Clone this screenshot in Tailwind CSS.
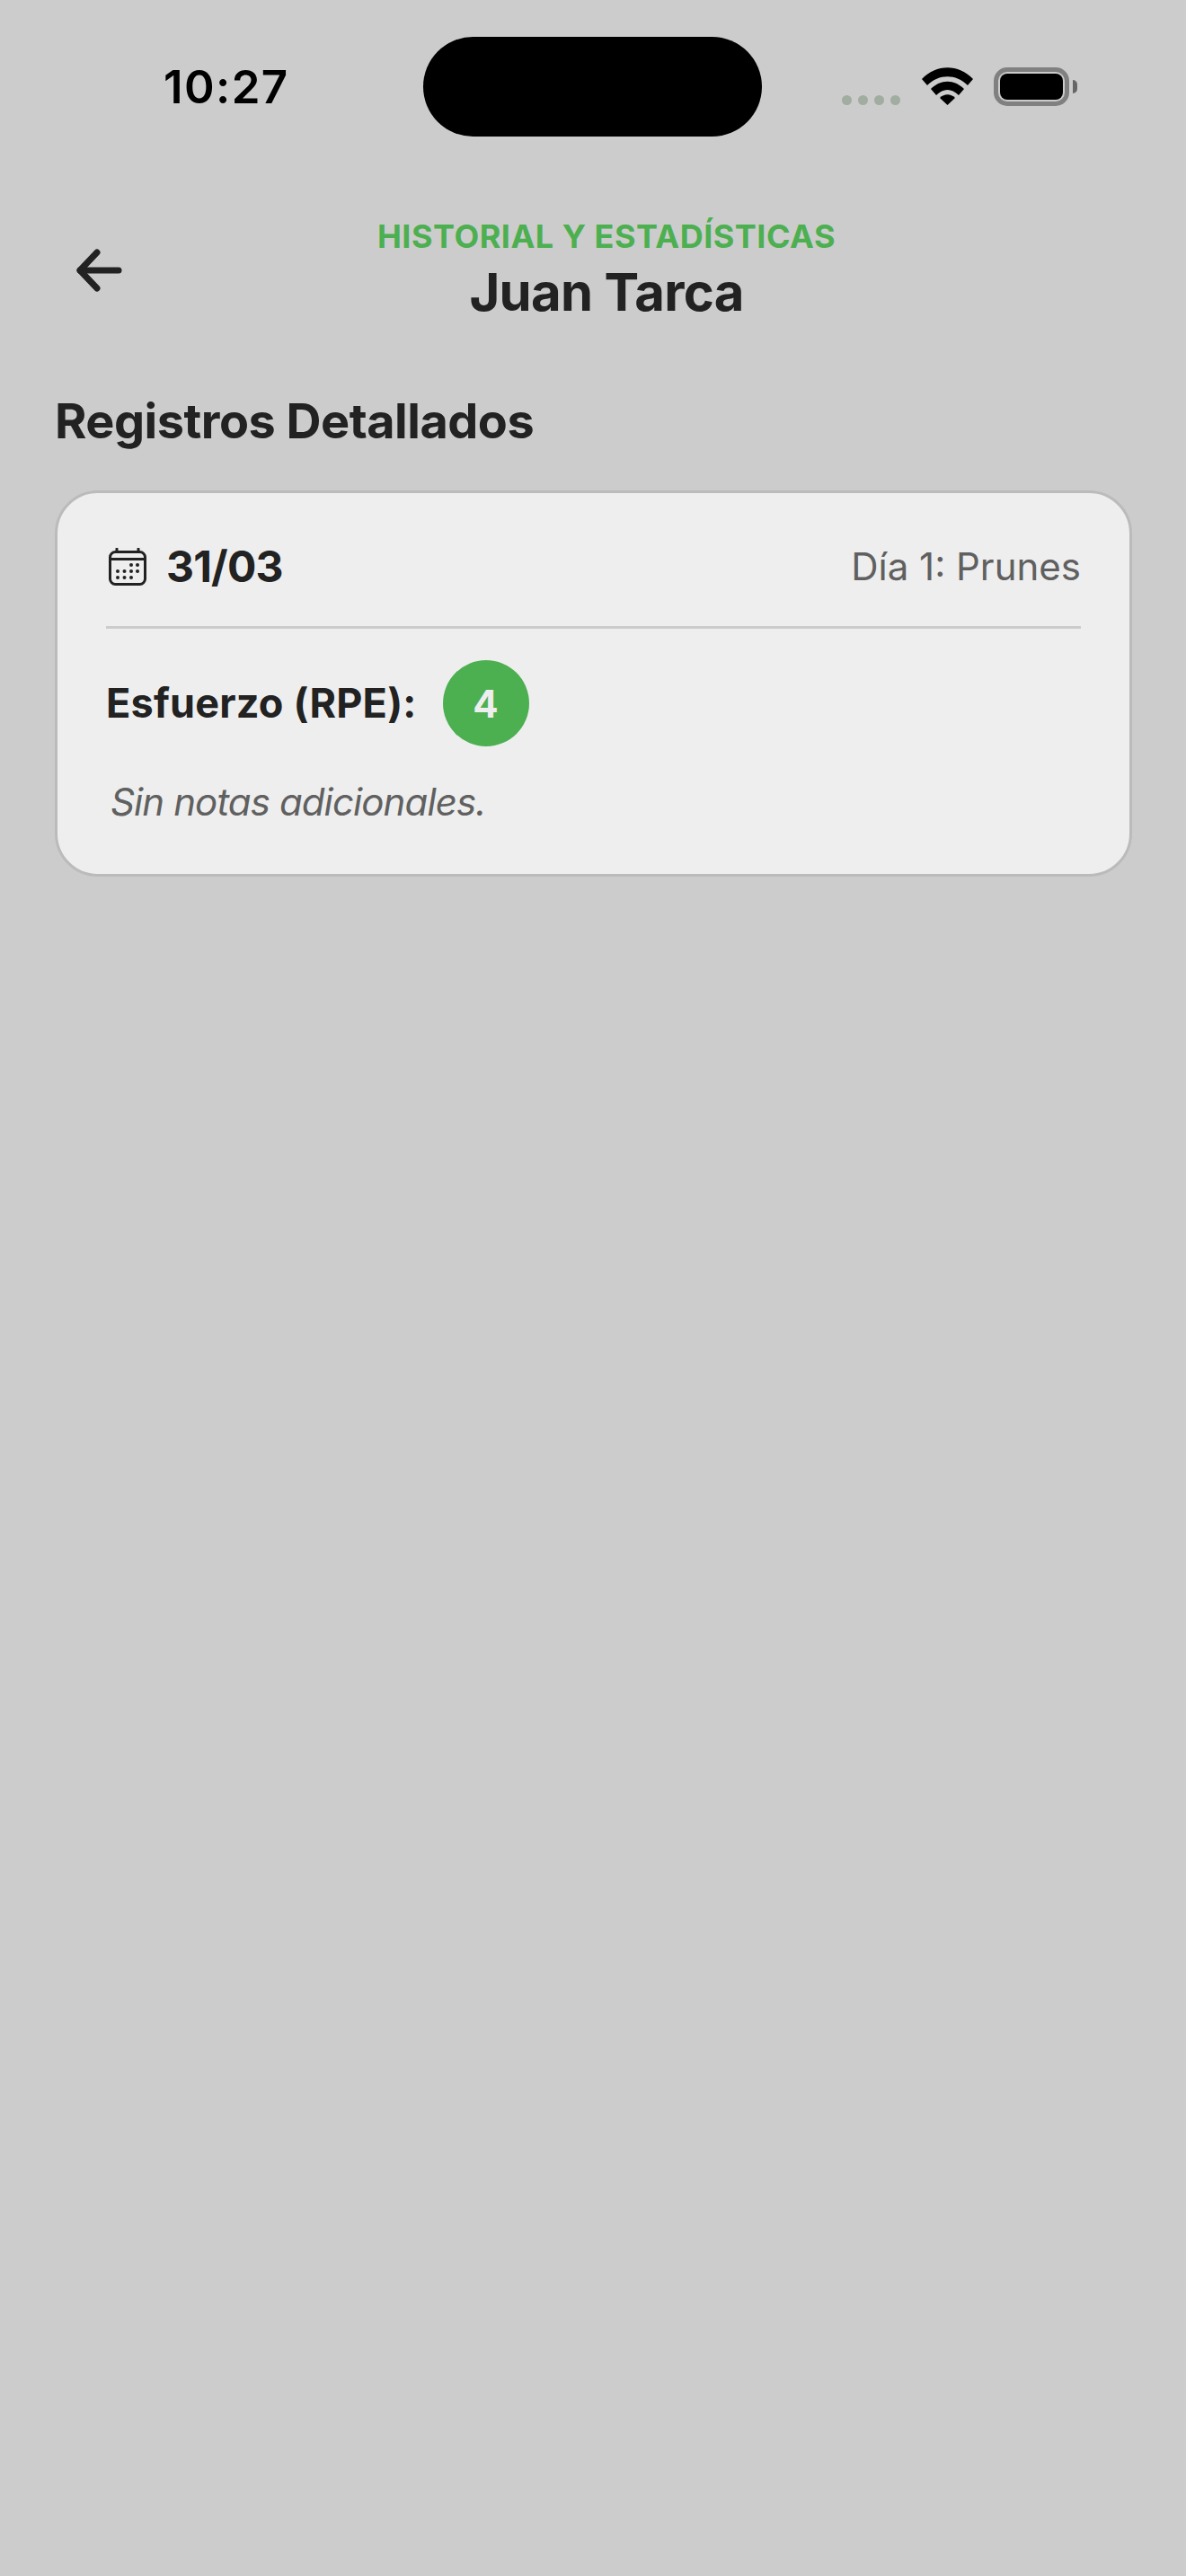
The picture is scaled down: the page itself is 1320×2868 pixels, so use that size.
<!DOCTYPE html>
<html>
<head>
  <meta charset="utf-8">
  <title>Historial y Estadísticas</title>
  <script src="https://cdn.jsdelivr.net/npm/@tailwindcss/browser@4"></script>
</head>
<body class="bg-[#cccccc] font-['Inter',sans-serif]">
  <div class="w-[1320px] h-[2868px] bg-[#cccccc] overflow-hidden">

    <!-- status bar -->
    <div class="flex h-[152px] pt-[41px]">
      <div class="w-[471px] pl-[182px] pt-[25px] text-[51px] leading-[62px] font-semibold tracking-[1.4px] text-black">10:27</div>
      <div class="w-[377px] h-[111px] rounded-full bg-black"></div>
      <div class="flex items-start pl-[89px]">
        <div class="flex gap-[7px] mt-[65px]">
          <span class="w-[11px] h-[11px] rounded-full bg-[#a0ada0]"></span>
          <span class="w-[11px] h-[11px] rounded-full bg-[#a0ada0]"></span>
          <span class="w-[11px] h-[11px] rounded-full bg-[#a0ada0]"></span>
          <span class="w-[11px] h-[11px] rounded-full bg-[#a0ada0]"></span>
        </div>
        <svg class="ml-[24px] mt-[34px]" width="57" height="42" viewBox="0 0 57 42">
          <path d="M0 13 C16 -4 41 -4 57 13 L51 20 C38 7 19 7 6 20 Z" fill="#000"/>
          <path d="M10 24 C21 13 36 13 47 24 L41 31 C33 23 24 23 16 31 Z" fill="#000"/>
          <path d="M20 34 C25 29 32 29 37 34 L28.500 42 Z" fill="#000"/>
        </svg>
        <div class="ml-[23px] mt-[34px] w-[84px] h-[43px] rounded-[15px] border-[5px] border-[#808080] p-[2px]">
          <div class="w-full h-full rounded-[8px] bg-black"></div>
        </div>
        <div class="ml-[4px] mt-[48px] w-[5px] h-[15px] rounded-r-full bg-[#666666]"></div>
      </div>
    </div>

    <!-- header -->
    <div class="flex items-center pl-[75px] pr-[117px] mt-[89px]">
      <svg class="shrink-0" width="72" height="72" viewBox="0 0 72 72" fill="none" stroke="#222222" stroke-width="7" stroke-linecap="round" stroke-linejoin="round">
        <path d="M14 36 H57"/>
        <path d="M33 16 L14 36 L33 56"/>
      </svg>
      <div class="flex-1 text-center">
        <div class="text-[36px] leading-[44px] font-bold tracking-[0.5px] text-[#4caf50]">HISTORIAL Y ESTADÍSTICAS</div>
        <div class="mt-[5px] text-[58px] leading-[70px] font-bold tracking-[-0.7px] text-[#222222]">Juan Tarca</div>
      </div>
    </div>

    <h2 class="ml-[61px] mt-[76px] text-[54px] leading-[66px] font-bold tracking-[-0.5px] text-[#222222]">Registros Detallados</h2>

    <!-- card -->
    <div class="ml-[61px] mr-[60px] mt-[44px] h-[430px] rounded-[48px] border-[3px] border-[#bbbbbb] bg-[#eeeeee] px-[54px] pt-[34px]">
      <div class="flex items-center justify-between h-[96px] border-b-[3px] border-[#cccccc] pb-[18px] box-content">
        <div class="flex items-center">
          <svg class="ml-[3px]" width="42" height="42" viewBox="0 0 42 42" fill="none">
            <rect x="1.500" y="4.500" width="39" height="36" rx="6" stroke="#222222" stroke-width="3"/>
            <path d="M1.500 12.500 H40.500" stroke="#222222" stroke-width="3"/>
            <path d="M9 1 V4 M33 1 V4" stroke="#222222" stroke-width="3" stroke-linecap="round"/>
            <g fill="#222222">
              <circle cx="25" cy="19" r="2"/><circle cx="32" cy="19" r="2"/>
              <circle cx="10" cy="26" r="2"/><circle cx="17.500" cy="26" r="2"/><circle cx="25" cy="26" r="2"/><circle cx="32" cy="26" r="2"/>
              <circle cx="10" cy="33" r="2"/><circle cx="17.500" cy="33" r="2"/><circle cx="25" cy="33" r="2"/>
            </g>
          </svg>
          <span class="ml-[22px] text-[48px] leading-[58px] font-bold tracking-[-0.8px] text-[#222222]">31/03</span>
        </div>
        <span class="text-[42px] leading-[52px] text-[#606060]">Día 1: Prunes</span>
      </div>
      <div class="flex items-center mt-[35px]">
        <span class="text-[45px] leading-[54px] font-bold tracking-[0.2px] text-[#222222]">Esfuerzo (RPE):</span>
        <div class="ml-[29px] flex items-center justify-center w-[96px] h-[96px] rounded-full bg-[#4caf50] text-[42px] font-bold text-[#eeeeee]">4</div>
      </div>
      <p class="ml-[5px] mt-[36px] text-[42px] leading-[52px] italic tracking-[-0.9px] text-[#606060]">Sin notas adicionales.</p>
    </div>
  </div>
</body>
</html>
